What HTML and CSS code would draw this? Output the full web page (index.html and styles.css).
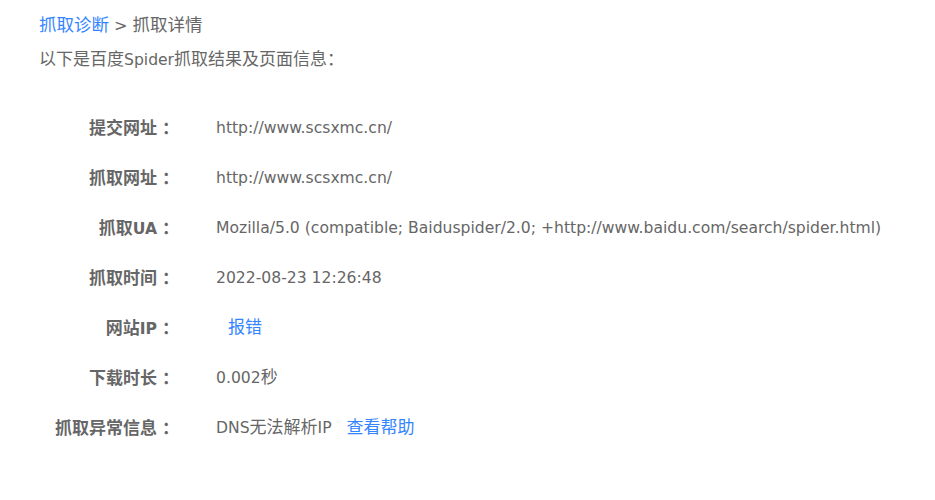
FILE: index.html
```html
<!DOCTYPE html>
<html lang="zh-CN">
<head>
<meta charset="utf-8">
<title>抓取详情</title>
<link rel="stylesheet" href="styles.css">
</head>
<body>
<div class="page">
  <div class="crumb"><a class="link" href="#">抓取诊断</a><span class="en"> &gt; </span>抓取详情</div>
  <div class="intro">以下是百度<span class="en">Spider</span>抓取结果及页面信息：</div>
  <div class="details">
    <div class="label">提交网址<span class="colon">：</span></div><div class="value">http://www.scsxmc.cn/</div>
    <div class="label">抓取网址<span class="colon">：</span></div><div class="value">http://www.scsxmc.cn/</div>
    <div class="label">抓取<span class="en">UA</span><span class="colon">：</span></div><div class="value">Mozilla/5.0 (compatible; Baiduspider/2.0; +http://www.baidu.com/search/spider.html)</div>
    <div class="label">抓取时间<span class="colon">：</span></div><div class="value">2022-08-23 12:26:48</div>
    <div class="label">网站<span class="en">IP</span><span class="colon">：</span></div><div class="value"><span class="ip"></span><a class="link zh report" href="#">报错</a></div>
    <div class="label">下载时长<span class="colon">：</span></div><div class="value">0.002<span class="zh">秒</span></div>
    <div class="label">抓取异常信息<span class="colon">：</span></div><div class="value">DNS<span class="zh">无法解析</span>IP<a class="link zh help" href="#">查看帮助</a></div>
  </div>
</div>
</body>
</html>
```
FILE: styles.css
```css
html, body {
  margin: 0;
  padding: 0;
  background: #fff;
}
.page {
  padding: 7px 0 0 39px;
  font-family: "DejaVu Sans", "Noto Sans CJK SC", sans-serif;
  color: #666;
  font-size: 17px;
}
.link {
  color: #3385ff;
  text-decoration: none;
}
.zh {
  font-size: 17px;
  line-height: 1;
}
.en {
  font-size: 15.6px;
  line-height: 1;
}
.crumb {
  font-size: 17.5px;
  line-height: 36px;
}
.crumb .en {
  font-size: 16px;
}
.intro {
  line-height: 32px;
}
.details {
  margin-top: 28px;
  display: grid;
  grid-template-columns: 140px 1fr;
  column-gap: 37px;
}
.label, .value {
  line-height: 50px;
  white-space: nowrap;
}
.label {
  text-align: right;
  font-weight: bold;
}
.colon {
  margin-left: 5px;
}
.value {
  font-size: 15.6px;
}
.report {
  margin-left: 12px;
}
.help {
  margin-left: 15px;
}
```
